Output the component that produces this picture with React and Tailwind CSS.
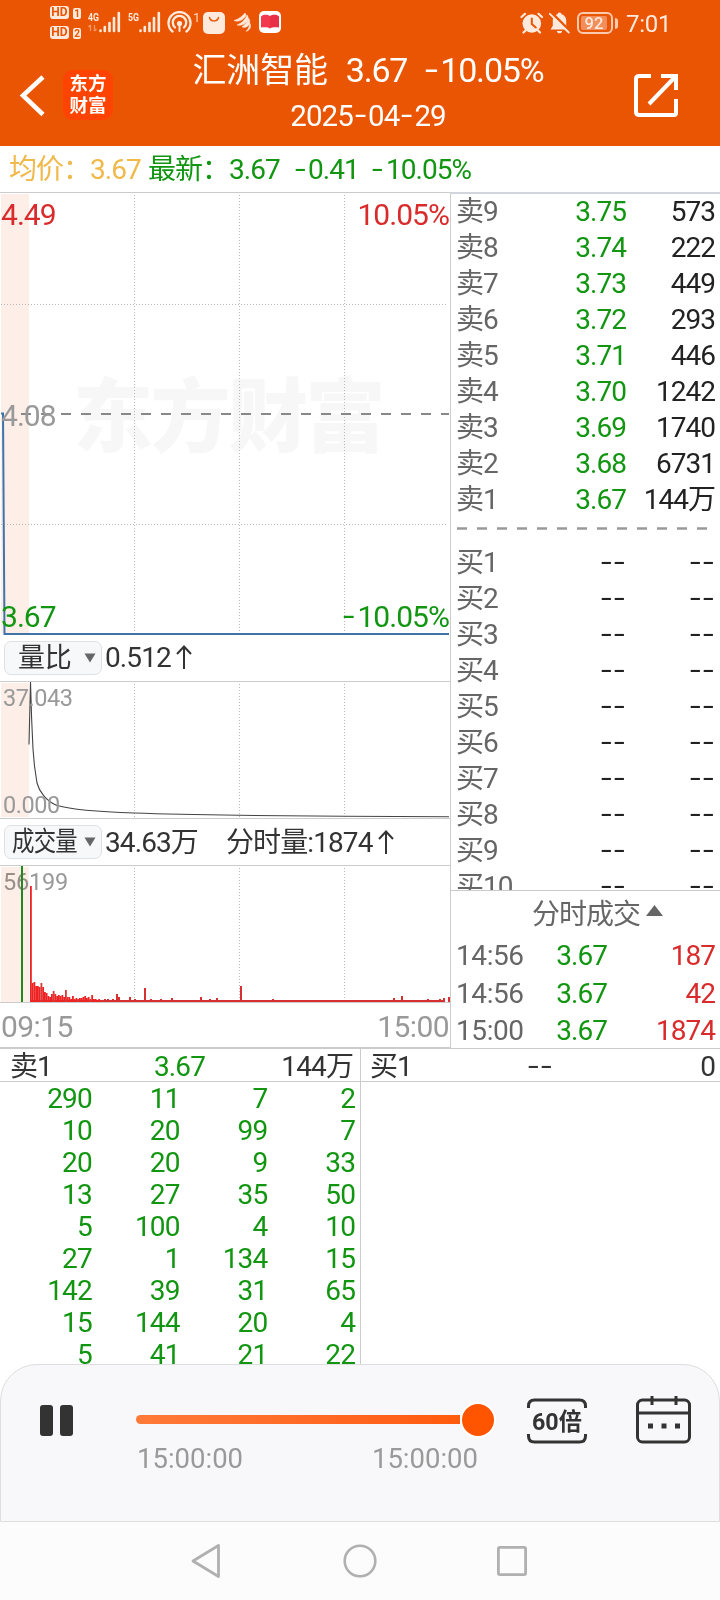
import React from 'react';

const sellOrders = [
  ['卖9', '3.75', '573'],
  ['卖8', '3.74', '222'],
  ['卖7', '3.73', '449'],
  ['卖6', '3.72', '293'],
  ['卖5', '3.71', '446'],
  ['卖4', '3.70', '1242'],
  ['卖3', '3.69', '1740'],
  ['卖2', '3.68', '6731'],
  ['卖1', '3.67', '144万'],
];

const buyOrders = ['买1', '买2', '买3', '买4', '买5', '买6', '买7', '买8', '买9', '买10'];

const trades = [
  ['14:56', '3.67', '187'],
  ['14:56', '3.67', '42'],
  ['15:00', '3.67', '1874'],
];

const queue = [
  [290, 11, 7, 2],
  [10, 20, 99, 7],
  [20, 20, 9, 33],
  [13, 27, 35, 50],
  [5, 100, 4, 10],
  [27, 1, 134, 15],
  [142, 39, 31, 65],
  [15, 144, 20, 4],
  [5, 41, 21, 22],
];

// opening minutes, one bar each
const openVolume = [
  116, 19, 20, 16, 16, 15, 19, 15, 10, 9, 6, 5, 8, 11, 8, 6, 7, 6, 7, 5, 12, 5, 5, 3, 6, 3, 4, 3,
  4, 4, 5, 6, 4, 5, 3, 7, 3, 3, 2, 3,
];

// [x, height] of the later minutes that stand out
const spikes = [
  [104, 3], [107, 3], [112, 3], [116, 8], [118, 5], [122, 2], [129, 5], [134, 3], [144, 14],
  [150, 3], [160, 3], [171, 4], [200, 5], [209, 3], [216, 4], [240, 16], [272, 3], [380, 2],
  [393, 4], [401, 6], [427, 3], [439, 3], [443, 4], [448, 5],
];

const GRID_X = [134.5, 239.5, 344.5];

const Hyphen = () => (
  <span className="inline-block w-[12px] text-left -translate-y-px origin-left scale-x-[1.38]">-</span>
);

const Blank = () => (
  <span className="whitespace-nowrap">
    <Hyphen />
    <span className="inline-block w-[1.5px]" />
    <Hyphen />
  </span>
);

const DateDash = () => (
  <span className="inline-block pl-[2px] pr-px"><Hyphen /></span>
);

const Grid = ({ height, rows = [] }) => (
  <>
    <rect x="1" y="1" width="28" height={height - 2} fill="#fdeee8" />
    {GRID_X.map((x) => (
      <line key={x} x1={x} y1="2" x2={x} y2={height} stroke="#b9b9b9" strokeDasharray="1 2" />
    ))}
    {rows.map((y) => (
      <line key={y} x1="1" y1={y} x2="448" y2={y} stroke="#b9b9b9" strokeDasharray="1 2" />
    ))}
  </>
);

const SignalBars = ({ label, data }) => (
  <svg className="h-[22px] w-[33px]" viewBox="0 0 33 22">
    <text x="0" y="9.5" fontSize="11.5" fontWeight="700" fill="#fdeadd" textLength="11" lengthAdjust="spacingAndGlyphs">{label}</text>
    {data && <path d="M2.5 20v-6M0.5 16l2-2M6.5 14v6M8.5 18l-2 2" stroke="#f49a68" strokeWidth="1.3" fill="none" />}
    <path d="M12.5 20v-.5M16.8 20v-4M21.5 20v-8M26 20V7M30.8 20V2" stroke="#fdeadd" strokeWidth="2.6" strokeLinecap="round" />
  </svg>
);

const HdBadge = ({ n }) => (
  <div className="flex gap-[4px] text-[12px] leading-[13px] font-bold text-[#ea5504]">
    <span className="w-[19px] h-[13px] rounded-[3px] bg-[#fdeadd] text-center">HD</span>
    <span className="w-[8px] h-[11px] mt-[2px] rounded-[2px] bg-[#fdeadd] text-center text-[10px] leading-[11px]">{n}</span>
  </div>
);

const StatusBar = () => (
  <div className="h-[48px] flex items-start text-[#fdeadd]">
    <div className="ml-[50px] mt-[6px] flex flex-col gap-[7px]">
      <HdBadge n="1" />
      <HdBadge n="2" />
    </div>
    <div className="ml-[7px] mt-[11px] flex items-start">
      <SignalBars label="4G" data />
      <div className="w-[7px]" />
      <SignalBars label="5G" />
      <svg className="ml-[6px] w-[26px] h-[24px]" viewBox="0 0 26 24" fill="none" stroke="#fdeadd" strokeWidth="2.3" strokeLinecap="round">
        <path d="M5.5 20.5a11 11 0 1 1 14 0" />
        <path d="M8 16.5a6.7 6.7 0 1 1 9 0" />
        <circle cx="12.5" cy="12.5" r="2.6" fill="#fdeadd" stroke="none" />
        <path d="M12.5 14v6" strokeWidth="2" />
      </svg>
      <span className="text-[13px] leading-[13px] w-[10px] text-[#fbd5bf]">1</span>
      <svg className="mt-[1px] w-[22px] h-[22px]" viewBox="0 0 22 22">
        <rect width="22" height="22" rx="5" fill="#fdeadd" />
        <path d="M6.5 5.5c1 4.5 8 4.5 9 0" fill="none" stroke="#ea5504" strokeWidth="1.4" strokeLinecap="round" />
      </svg>
      <svg className="ml-[9px] mt-[2px] w-[17px] h-[19px]" viewBox="0 0 17 19" fill="#fdeadd" stroke="#fdeadd" strokeWidth="0.5">
        <path d="M0 7.5C5 6 8 3.5 11 0c1.5 1.5 1 3-.4 4.600C7.5 8 3.500 9 0 7.500z" />
        <path d="M3 12C8 10 11 7 13 2c1.800 2 1.300 4.500 0 6.500C10.500 11.500 7 13 3 12z" />
        <path d="M8 14c3.500-2.500 5.500-5 6.500-9 1.800 2.200 1.500 5 .3 7C13.300 14 11 15 8 14z" />
        <path d="M12 18.500c2.500-2.500 3.500-5 3.500-8.500 2 2 1.800 6.500-3.500 8.500z" />
      </svg>
      <svg className="ml-[8px] w-[22px] h-[22px]" viewBox="0 0 22 22">
        <rect width="22" height="22" rx="5" fill="#fff" />
        <path d="M2 5.500l2-1.500c3-.5 5-.4 7 1v12.400C9 16 6 16 2 16.500z" fill="#f4384e" />
        <path d="M20 5.500l-2-1.500c-3-.5-5-.4-7 1v12.400c2-1.200 5-1.200 9-.9z" fill="#e72f45" />
      </svg>
    </div>
    <svg className="ml-[239px] mt-[12px] w-[24px] h-[22px]" viewBox="0 0 24 22" fill="none" stroke="#fdeadd" strokeLinecap="round">
      <circle cx="11.8" cy="11.5" r="9.3" fill="#fdeadd" stroke="none" />
      <path d="M1.500 5L5 1.800M22 5l-3.500-3.200M3.500 20.500l2-2M20 20.500l-2-2" strokeWidth="2.2" />
      <path d="M11.800 6.500v5.500l4 3.500" stroke="#ea5504" strokeWidth="2" />
    </svg>
    <svg className="ml-[5px] mt-[12px] w-[21px] h-[22px]" viewBox="0 0 21 22">
      <path d="M10.500.5c1.200 0 2 .7 2 1.800 2.800.8 4.700 3 4.700 6v5.500l2.300 3.700H1.500l2.300-3.700V8.300c0-3 1.900-5.200 4.700-6 0-1.100.8-1.800 2-1.800z" fill="#fdeadd" />
      <path d="M7.800 19h5.400c-.3 1.500-1.300 2.300-2.700 2.300S8.100 20.500 7.800 19z" fill="#fdeadd" />
      <path d="M2 0l18.500 18.500" stroke="#ea5504" strokeWidth="2.5" />
      <path d="M.8 1.800L19.800 20.500" stroke="#fdeadd" strokeWidth="1.8" strokeLinecap="round" />
    </svg>
    <div className="ml-[7px] mt-[12px] flex items-center">
      <div className="w-[36px] h-[22px] rounded-[6px] border-2 border-[#fbc9ae] p-[2px]">
        <div className="w-[26px] h-[14px] rounded-[2px] bg-[#f28e5c] text-[16.5px] leading-[15px] font-medium text-center">92</div>
      </div>
      <div className="ml-[2px] w-[3px] h-[11px] rounded-r bg-[#fbc9ae]" />
    </div>
    <span className="ml-[8px] mt-[12px] text-[24px] leading-[24px] tracking-[-0.3px]">7:01</span>
  </div>
);

const Header = () => (
  <header className="h-[146px] bg-[#ea5504] text-white">
    <StatusBar />
    <div className="h-[98px] flex items-start">
      <svg className="ml-[18px] mt-[26px] w-[28px] h-[44px]" viewBox="0 0 28 44" fill="none" stroke="#fff" strokeWidth="4.5">
        <path d="M25 3L5 21.5 25 40.5" />
      </svg>
      <div className="ml-[17px] mt-[22px] w-[50px] h-[50px] rounded-[10px] bg-[#ff4300] flex flex-col items-center pt-[3px] text-[18.5px] leading-[22px] font-bold">
        <span>东方</span>
        <span>财富</span>
      </div>
      <div className="w-[514px] flex flex-col items-center">
        <h1 className="-mt-px ml-[-4px] flex gap-[18px] text-[34px] leading-[46px] tracking-[-0.035em]">
          <span className="tracking-[-0.2px]">汇洲智能</span>
          <span>3.67</span>
          <span><Hyphen /><span className="inline-block w-[3px]" />10.05%</span>
        </h1>
        <p className="ml-[-4px] pt-px text-[29.5px] leading-[44px] tracking-[-0.03em]">
          2025<DateDash />04<DateDash />29
        </p>
      </div>
      <svg className="ml-[5px] mt-[25px] w-[46px] h-[46px]" viewBox="0 0 46 46" fill="none" stroke="#fff" strokeWidth="4">
        <path d="M19 3H7.500Q4 3 4 6v33Q4 42 7.500 42H42a2 2 0 0 0 2-2V26M29 3h15v14M43 4L17 31" />
      </svg>
    </div>
  </header>
);

const Selector = ({ label, narrow }) => (
  <div className="w-[98px] h-[34px] rounded-[7px] border border-[#e0e1e3] bg-[#f7f8fa] flex items-center shrink-0">
    <div className={narrow ? 'pl-[7px] w-[78px]' : 'pl-[13px] w-[78px]'}>
      <span className={narrow ? 'inline-block whitespace-nowrap origin-left scale-x-[0.83] text-[27px]' : 'text-[27px] tracking-[-0.3px]'}>{label}</span>
    </div>
    <svg className="w-[12px] h-[10px] ml-px" viewBox="0 0 12 10"><path d="M0.5 0.5h11L6 9.5z" fill="#666" /></svg>
  </div>
);

const UpArrow = () => (
  <svg className="inline-block w-[16px] h-[25px] ml-[5px] align-[-3px]" viewBox="0 0 16 25" fill="none" stroke="#333" strokeWidth="2">
    <path d="M8 24V1.5M1 9l7-7.5L15 9" />
  </svg>
);

const PriceChart = () => (
  <div className="relative h-[443px] border-t border-[#ccc] flex flex-col text-[30px] leading-[30px] tracking-[-0.032em]">
    <div className="absolute left-[73px] top-[180px] text-[80px] leading-[90px] tracking-[-2.5px] font-black text-[#f7f7f7] whitespace-nowrap">东方财富</div>
    <svg className="absolute left-0 top-0 w-[450px] h-[442px]" viewBox="0 0 450 442">
      <Grid height={441} rows={[111.5, 331.5]} />
      <path d="M21 221H31M41 221H51M61 221H449" stroke="#888" strokeWidth="2" strokeDasharray="10 10" />
      <path d="M1 220.5H3L4.5 441H449" stroke="#3f74ab" strokeWidth="2" fill="none" />
    </svg>
    <div className="relative pt-[7px] pl-px pr-px flex justify-between text-[#d92b2b]">
      <span>4.49</span>
      <span>10.05%</span>
    </div>
    <span className="relative mt-[171px] pl-px text-[#999]">4.08</span>
    <div className="relative mt-[171px] pl-px pr-px flex justify-between text-[#129612]">
      <span>3.67</span>
      <span><Hyphen /><span className="inline-block w-[2px]" />10.05%</span>
    </div>
  </div>
);

const RatioChart = () => (
  <div className="relative h-[138px] border-y border-[#ccc] pl-[3px] flex flex-col text-[23.5px] leading-[24px] tracking-[-0.02em] text-[#999]">
    <svg className="absolute left-0 top-0 w-[450px] h-[136px]" viewBox="0 0 450 136">
      <Grid height={136} />
      <path
        d="M29 62.5L30.5 0L31.6 36L33 67L34.5 84L37 101C39 109 46 119 57 123.5C75 128.5 105 130 134 131C170 132.200 205 132.800 239 133.300L344 134.200L449 134.700"
        stroke="#444"
        strokeWidth="1.1"
        fill="none"
      />
    </svg>
    <span className="relative mt-[4px]">37.043</span>
    <span className="relative mt-[83px]">0.000</span>
  </div>
);

const VolumeChart = () => (
  <div className="relative h-[138px] border-y border-[#ccc] pl-[3px] text-[23.5px] leading-[24px] tracking-[-0.01em] text-[#999]">
    <span className="relative block pt-[4px]">56199</span>
    <svg className="absolute left-0 top-0 w-[450px] h-[136px]" viewBox="0 0 450 136">
      <g className="mix-blend-multiply">
        <Grid height={137} />
      </g>
      <rect x="21" y="0" width="2" height="136" fill="#1e8a1e" />
      <rect x="30" y="134" width="414" height="2" fill="#d83030" />
      {openVolume.map((h, i) => (
        <rect key={i} x={30 + i * 1.75} y={136 - h} width="1.8" height={h} fill={i % 7 === 6 ? '#d83838' : '#ee2222'} />
      ))}
      {spikes.map(([x, h]) => (
        <rect key={x} x={x} y={136 - h} width="2" height={h} fill="#d83030" />
      ))}
    </svg>
  </div>
);

const Charts = () => (
  <div className="w-[450px] shrink-0 text-[#333]">
    <PriceChart />
    <div className="h-[46px] pl-[4px] pb-px flex items-center text-[28px] leading-[34px] tracking-[-0.032em]">
      <Selector label="量比" />
      <span className="ml-[3px]">0.512<UpArrow /></span>
    </div>
    <RatioChart />
    <div className="h-[46px] pl-[4px] pb-px flex items-center text-[28px] leading-[34px] tracking-[-0.032em]">
      <Selector label="成交量" narrow />
      <span className="ml-[3px] pt-[2px]">34.63万</span>
      <span className="ml-[28px] pt-[2px]">分时量:1874<UpArrow /></span>
    </div>
    <VolumeChart />
    <div className="h-[45px] border-b border-[#ccc] pt-[9px] pl-px pr-px flex justify-between text-[30px] leading-[30px] tracking-[-0.02em] text-[#999]">
      <span>09:15</span>
      <span>15:00</span>
    </div>
  </div>
);

const OrderRow = ({ label, price, volume }) => (
  <div className="h-[36px] flex text-[#222]">
    <span className="w-[80px] text-[#666]">{label}</span>
    <span className="w-[90px] text-right text-[#129612]">{price}</span>
    <span className="flex-1 text-right">{volume}</span>
  </div>
);

const BuyRow = ({ label }) => (
  <div className="h-[36px] flex text-[#222]">
    <span className="w-[80px] text-[#666]">{label}</span>
    <span className="w-[90px] text-right"><Blank /></span>
    <span className="flex-1 text-right"><Blank /></span>
  </div>
);

const OrderBook = () => (
  <div className="flex-1 border-l border-t-2 border-l-[#ccc] border-t-[#d3d5de] text-[28px] leading-[36px] tracking-[-0.035em]">
    <div className="h-[697px] pl-[5px] pr-[5px] overflow-hidden border-b border-[#ccc]">
      {sellOrders.map(([label, price, volume]) => (
        <OrderRow key={label} label={label} price={price} volume={volume} />
      ))}
      <svg className="block ml-px w-[252px] h-[27px]" viewBox="0 0 252 27">
        <path d="M0 10.5H252" stroke="#999" strokeWidth="2.5" strokeDasharray="10 10" />
      </svg>
      {buyOrders.map((label) => (
        <BuyRow key={label} label={label} />
      ))}
    </div>
    <div className="h-[43px] pt-[6px] pl-[24px] flex justify-center text-[#666]">
      <span>分时成交</span>
      <svg className="w-[17px] h-[11px] mt-[8px] ml-[6px]" viewBox="0 0 17 11"><path d="M8.5 0L17 11H0z" fill="#666" /></svg>
    </div>
    <div className="pl-[5px] pr-[5px] pt-[3px] leading-[37.5px]">
      {trades.map(([time, price, volume], i) => (
        <div key={i} className="flex">
          <span className="w-[80px] text-[#666] tracking-[-0.015em]">{time}</span>
          <span className="w-[71px] text-right text-[#129612]">{price}</span>
          <span className="flex-1 text-right text-[#d92b2b]">{volume}</span>
        </div>
      ))}
    </div>
  </div>
);

const QueuePanel = () => (
  <div className="h-[316px] flex overflow-hidden border-t border-[#ccc] text-[28px] leading-[32px] tracking-[-0.032em] text-[#333]">
    <div className="w-[361px] border-r border-[#ccc]">
      <div className="h-[33px] border-b border-[#ccc] pt-[2px] pl-[10px] pr-[7px] flex">
        <span className="w-[80px]">卖1</span>
        <span className="w-[115px] text-right text-[#129612]">3.67</span>
        <span className="flex-1 text-right">144万</span>
      </div>
      <div className="pt-px pl-[4px] pr-[5px] grid grid-cols-4 text-right text-[#129612]">
        {queue.flat().map((n, i) => (
          <span key={i}>{n}</span>
        ))}
      </div>
    </div>
    <div className="flex-1">
      <div className="h-[33px] border-b border-[#ccc] pt-[2px] pl-[9px] pr-[5px] flex">
        <span className="w-[80px]">买1</span>
        <span className="w-[103px] text-right"><Blank /></span>
        <span className="flex-1 text-right">0</span>
      </div>
    </div>
  </div>
);

const Player = () => (
  <div className="h-[158px] rounded-t-[37px] border border-[#dedee0] bg-[#f8f8fa] flex items-start">
    <div className="ml-[39px] mt-[40px] flex gap-[7px]">
      <div className="w-[13px] h-[31px] rounded-[3px] bg-[#333]" />
      <div className="w-[13px] h-[31px] rounded-[3px] bg-[#333]" />
    </div>
    <div className="ml-[63px] mt-[37px] w-[360px]">
      <div className="h-[36px] flex items-center">
        <div className="w-[324px] h-[9px] -mt-px rounded-l-full bg-linear-to-r from-[#ff7a38] to-[#ff5b0c]" />
        <div className="w-[36px] h-[36px] rounded-full bg-[#ff5500] border-2 border-white" />
      </div>
      <div className="pt-[4px] pl-px pr-[18px] flex justify-between text-[27.5px] leading-[34px] text-[#999]">
        <span>15:00:00</span>
        <span>15:00:00</span>
      </div>
    </div>
    <svg className="ml-[31px] mt-[32px] w-[60px] h-[48px]" viewBox="0 0 60 48" fill="none" stroke="#333" strokeWidth="3">
      <path d="M1.5 11V9Q1.5 3 7.5 3h45Q58.5 3 58.5 9v2M1.5 37v2Q1.5 45 7.5 45h45Q58.5 45 58.5 39v-2" />
      <text x="5" y="33" fontSize="23.5" fontWeight="700" fill="#333" stroke="none" textLength="50" lengthAdjust="spacingAndGlyphs">60倍</text>
    </svg>
    <svg className="ml-[48px] mt-[30px] w-[56px] h-[50px]" viewBox="0 0 56 50" fill="none" stroke="#333" strokeWidth="3">
      <rect x="2.5" y="5" width="52" height="42" rx="5" />
      <path d="M2.5 18h52M17 1v9M41 1v9" />
      <path d="M13 31h5M26.500 31h5M40 31h5" strokeWidth="5" />
    </svg>
  </div>
);

const NavBar = () => (
  <div className="h-[78px] bg-[#fcfcfc] flex items-center pl-[189px] gap-[122px]">
    <svg className="w-[32px] h-[36px]" viewBox="0 0 32 36" fill="none" stroke="#b0b0b0" strokeWidth="2.8" strokeLinejoin="round">
      <path d="M29.5 2.5v31L4 18z" />
    </svg>
    <svg className="w-[34px] h-[34px]" viewBox="0 0 34 34" fill="none" stroke="#b0b0b0" strokeWidth="2.6">
      <circle cx="17" cy="17" r="15.3" />
    </svg>
    <svg className="-ml-[2px] w-[30px] h-[30px]" viewBox="0 0 30 30" fill="none" stroke="#b0b0b0" strokeWidth="2.8">
      <rect x="1.4" y="1.4" width="27.2" height="27.2" rx="1.5" />
    </svg>
  </div>
);

const App = () => {
  return (
    <div lang="zh-CN" className="w-[720px] h-[1600px] overflow-hidden bg-white font-['Roboto','Noto_Sans_CJK_SC',sans-serif]">
      <Header />
      <div className="h-[46px] pt-[2px] pl-[9px] flex items-center text-[28px] leading-[44px] tracking-[-0.035em] text-[#129612] whitespace-pre">
        <span className="w-[139px] text-[#f0b94a]">均价：3.67</span>
        <span className="w-[147px]">最新：3.67</span>
        <span className="w-[77px]"><Hyphen /><span className="inline-block w-px" />0.41</span>
        <span><Hyphen /><span className="inline-block w-[2px]" />10.05%</span>
      </div>
      <div className="h-[856px] flex">
        <Charts />
        <OrderBook />
      </div>
      <QueuePanel />
      <Player />
      <NavBar />
    </div>
  );
};

export default App;
